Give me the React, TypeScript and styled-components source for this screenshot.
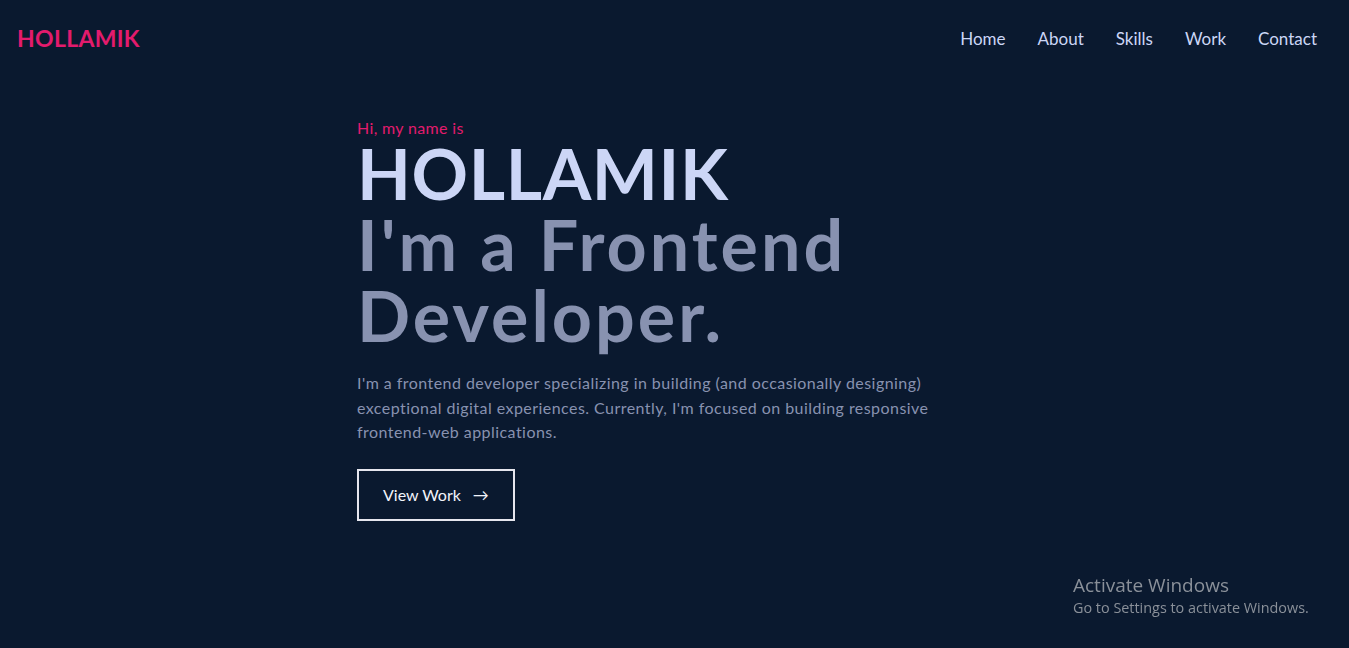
import React from "react";
import styled, { createGlobalStyle } from "styled-components";

const Global = createGlobalStyle`
  html, body { margin: 0; padding: 0; background: #0a192f; }
  body { font-family: "Lato", "Open Sans", sans-serif; }
  * { box-sizing: border-box; }
`;

const Page = styled.div`
  min-height: 648px;
  background: #0a192f;
  display: flex;
  flex-direction: column;
`;

const Header = styled.header`
  display: flex;
  align-items: center;
  justify-content: space-between;
  height: 76px;
  padding: 0 32px 0 17px;
`;

const Logo = styled.a`
  font-family: "Lato", sans-serif;
  font-weight: 700;
  font-size: 23px;
  color: #e31b6d;
  letter-spacing: 0.3px;
  text-decoration: none;
`;

const Nav = styled.nav`
  display: flex;
  gap: 32px;
`;

const NavLink = styled.a`
  font-family: "Lato", sans-serif;
  font-size: 17px;
  color: #ccd6f6;
  text-decoration: none;
`;

const Hero = styled.main`
  width: 635px;
  margin: 42px auto 0;
  display: flex;
  flex-direction: column;
  align-items: flex-start;
`;

const Greeting = styled.p`
  margin: 0;
  font-size: 16px;
  letter-spacing: 0.35px;
  color: #e31b6d;
  line-height: 20px;
`;

const Title = styled.h1<{ $tone: "light" | "dim" }>`
  margin: 0;
  font-family: "Lato", sans-serif;
  font-weight: 700;
  font-size: 70px;
  line-height: 71px;
  letter-spacing: ${(p) => (p.$tone === "light" ? "0.6px" : "3px")};
  color: ${(p) => (p.$tone === "light" ? "#ccd6f6" : "#8892b0")};
`;

const Lead = styled.p`
  margin: 20px 0 0;
  max-width: 590px;
  font-size: 16px;
  letter-spacing: 0.45px;
  line-height: 24.5px;
  color: #8892b0;
`;

const Button = styled.a`
  margin-top: 24px;
  display: inline-flex;
  align-items: center;
  gap: 12px;
  height: 52px;
  padding: 0 24px;
  border: 2px solid #e6e6ee;
  color: #f2f4fb;
  font-size: 16px;
  text-decoration: none;
`;

const Watermark = styled.div`
  position: fixed;
  left: 1073px;
  top: 573px;
  font-family: "Open Sans", "Noto Sans", sans-serif;
  color: #8a9099;
`;

const WmTitle = styled.div`
  font-size: 19px;
  line-height: 25px;
`;

const WmSub = styled.div`
  font-size: 14.4px;
  line-height: 20px;
`;

export default function App() {
  return (
    <Page>
      <Global />
      <Header>
        <Logo href="#">HOLLAMIK</Logo>
        <Nav>
          {["Home", "About", "Skills", "Work", "Contact"].map((n) => (
            <NavLink key={n} href="#">
              {n}
            </NavLink>
          ))}
        </Nav>
      </Header>
      <Hero>
        <Greeting>Hi, my name is</Greeting>
        <Title $tone="light">HOLLAMIK</Title>
        <Title $tone="dim" as="h2">
          I'm a Frontend
          <br />
          Developer.
        </Title>
        <Lead>
          I'm a frontend developer specializing in building (and occasionally
          designing) exceptional digital experiences. Currently, I'm focused on
          building responsive frontend-web applications.
        </Lead>
        <Button href="#">
          View Work <span>→</span>
        </Button>
      </Hero>
      <Watermark>
        <WmTitle>Activate Windows</WmTitle>
        <WmSub>Go to Settings to activate Windows.</WmSub>
      </Watermark>
    </Page>
  );
}
